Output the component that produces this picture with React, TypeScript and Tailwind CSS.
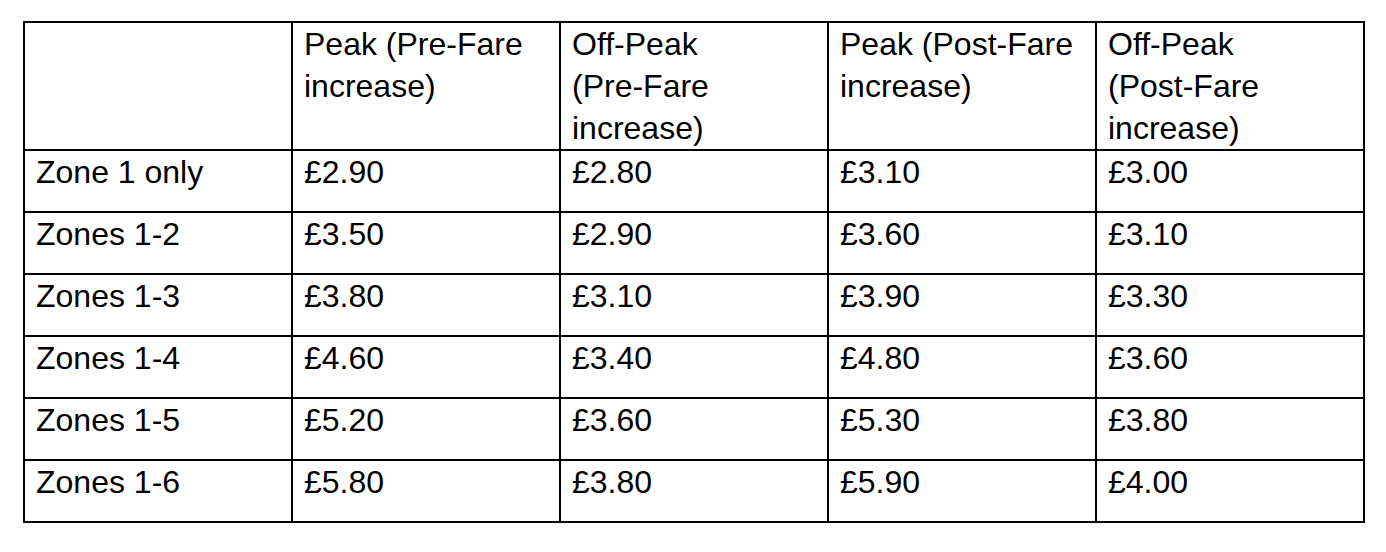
import React from "react";

const headers: string[][] = [
  [],
  ["Peak", "(Pre-Fare", "increase)"],
  ["Off-Peak", "(Pre-Fare", "increase)"],
  ["Peak", "(Post-Fare", "increase)"],
  ["Off-Peak", "(Post-Fare", "increase)"],
];

const rows: string[][] = [
  ["Zone 1 only", "£2.90", "£2.80", "£3.10", "£3.00"],
  ["Zones 1-2", "£3.50", "£2.90", "£3.60", "£3.10"],
  ["Zones 1-3", "£3.80", "£3.10", "£3.90", "£3.30"],
  ["Zones 1-4", "£4.60", "£3.40", "£4.80", "£3.60"],
  ["Zones 1-5", "£5.20", "£3.60", "£5.30", "£3.80"],
  ["Zones 1-6", "£5.80", "£3.80", "£5.90", "£4.00"],
];

export default function App() {
  return (
    <div
      className="w-[1386px] h-[552px] bg-white pt-[21px] pl-[23px] text-black"
      style={{ fontFamily: '"Liberation Sans", Arial, sans-serif' }}
    >
      <div className="grid w-max grid-cols-[repeat(5,268px)] grid-rows-[128px_repeat(6,62px)] border-t-2 border-l-2 border-black text-[32px] leading-[42px]">
        {headers.map((words, i) => (
          <div
            key={"h" + i}
            className="border-r-2 border-b-2 border-black pl-[11px] pr-[6px]"
          >
            {words.map((w, wi) => (
              <React.Fragment key={wi}>
                <span className="whitespace-nowrap">{w}</span>
                {wi < words.length - 1 ? " " : null}
              </React.Fragment>
            ))}
          </div>
        ))}
        {rows.map((r, ri) =>
          r.map((c, ci) => (
            <div
              key={ri + "-" + ci}
              className="border-r-2 border-b-2 border-black pl-[11px] pr-[6px] whitespace-nowrap"
            >
              {c}
            </div>
          ))
        )}
      </div>
    </div>
  );
}
